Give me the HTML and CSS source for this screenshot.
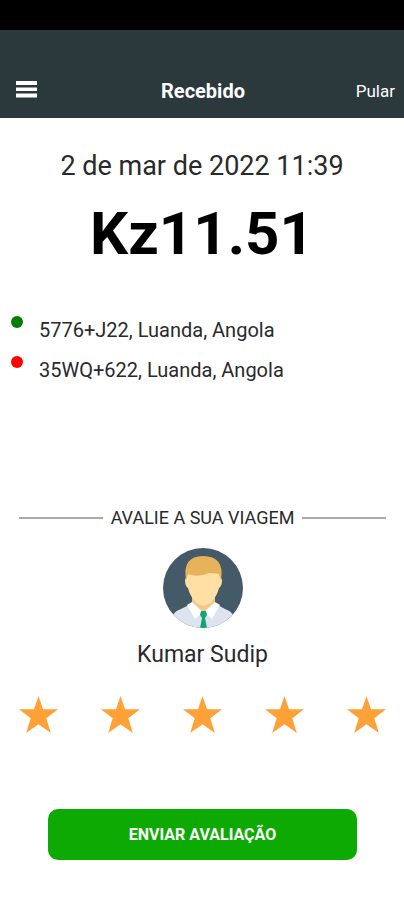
FILE: index.html
```
<!DOCTYPE html>
<html lang="pt">
<head>
  <meta charset="UTF-8" />
  <meta name="viewport" content="width=device-width, initial-scale=1.0" />
  <title>Recebido</title>
  <link rel="stylesheet" href="styles.css">
</head>
<body>
  <div class="status-bar"></div>
  <header class="top-bar">
    <button type="button" class="menu-button" aria-label="Menu">
      <svg width="22" height="18" viewBox="0 0 22 18" fill="#fff">
        <rect x="0" y="0" width="21" height="4" />
        <rect x="0" y="6.5" width="21" height="3.5" />
        <rect x="0" y="12.5" width="21" height="4" />
      </svg>
    </button>
    <h1>Recebido</h1>
    <a class="skip" href="#">Pular</a>
  </header>

  <main>
    <p class="date">2 de mar de 2022 11:39</p>
    <p class="price">Kz11.51</p>

    <ul class="route">
      <li><span class="dot pickup"></span>5776+J22, Luanda, Angola</li>
      <li><span class="dot dropoff"></span>35WQ+622, Luanda, Angola</li>
    </ul>

    <form class="rating-form">
      <h2>AVALIE A SUA VIAGEM</h2>

      <svg class="avatar" viewBox="0 0 80 80">
        <clipPath id="circle"><circle cx="40" cy="40" r="40" /></clipPath>
        <g clip-path="url(#circle)">
          <rect width="80" height="80" fill="#455a68" />
          <path d="M4 80 L10 67 Q12 63 18 61 L30 55 H51 L62 61 Q68 63 70 67 L76 80 Z" fill="#dde4f0" />
          <path d="M29 46 H52 V58 L41 65 L29 58 Z" fill="#f0c98c" />
          <path d="M29 54 L40 64 L32 71 L24 57 Z" fill="#fff" />
          <path d="M52 54 L41 64 L49 71 L57 57 Z" fill="#fff" />
          <path d="M38 63 H43 L44 67 L42 70 L44 80 H37 L39 70 L37 67 Z" fill="#16a277" />
          <path d="M24 27 Q24 9 40 9 Q57 9 57 27 L59 32 Q59 38 56 40 Q54 49 47 55 Q40 60 34 55 Q27 49 25 40 Q22 38 22 32 Z" fill="#ffdfa3" />
          <path d="M23 32 Q19 8 40 8 Q62 8 58 32 L56 26 Q51 25 46 25 Q34 30 25 26 Z" fill="#e8b25a" />
        </g>
      </svg>
      <p class="driver">Kumar Sudip</p>

      <div class="stars" role="radiogroup" aria-label="Avaliação">
        <label><input type="radio" name="stars" value="1" aria-label="1"><svg viewBox="0 0 38 36"><path d="M19 0 L23.4 13 H38 L26.6 21.6 L31 36 L19 27.4 L7 36 L11.4 21.6 L0 13 H14.6 Z" /></svg></label>
        <label><input type="radio" name="stars" value="2" aria-label="2"><svg viewBox="0 0 38 36"><path d="M19 0 L23.4 13 H38 L26.6 21.6 L31 36 L19 27.4 L7 36 L11.4 21.6 L0 13 H14.6 Z" /></svg></label>
        <label><input type="radio" name="stars" value="3" aria-label="3"><svg viewBox="0 0 38 36"><path d="M19 0 L23.4 13 H38 L26.6 21.6 L31 36 L19 27.4 L7 36 L11.4 21.6 L0 13 H14.6 Z" /></svg></label>
        <label><input type="radio" name="stars" value="4" aria-label="4"><svg viewBox="0 0 38 36"><path d="M19 0 L23.4 13 H38 L26.6 21.6 L31 36 L19 27.4 L7 36 L11.4 21.6 L0 13 H14.6 Z" /></svg></label>
        <label><input type="radio" name="stars" value="5" aria-label="5" checked><svg viewBox="0 0 38 36"><path d="M19 0 L23.4 13 H38 L26.6 21.6 L31 36 L19 27.4 L7 36 L11.4 21.6 L0 13 H14.6 Z" /></svg></label>
      </div>

      <button type="submit" class="submit">ENVIAR AVALIAÇÃO</button>
    </form>
  </main>
</body>
</html>
```
FILE: styles.css
```
* {
  box-sizing: border-box;
}
body {
  font-family: Roboto, sans-serif;
  background: #fff;
  color: #2a2a2a;
  margin: 0;
}
h1, h2, p, ul {
  margin: 0;
  padding: 0;
  font-weight: normal;
}
.status-bar {
  height: 30px;
  background: #000;
}
.top-bar {
  display: grid;
  grid-template-columns: 1fr auto 1fr;
  align-items: center;
  padding: 45px 9px 11px 11px;
  background: #2b383c;
  color: #fff;
}
.top-bar h1 {
  font-size: 20px;
  line-height: 32px;
  font-weight: bold;
}
.menu-button {
  justify-self: start;
  display: flex;
  padding: 0 5px 2px;
  border: none;
  background: none;
  cursor: pointer;
}
.skip {
  justify-self: end;
  color: #fff;
  font-size: 17px;
  text-decoration: none;
}
.date {
  margin-top: 28px;
  font-size: 27px;
  line-height: 40px;
  text-align: center;
}
.price {
  margin-top: 12px;
  color: #000;
  font-size: 60px;
  line-height: 72px;
  font-weight: bold;
  text-align: center;
}
.route {
  margin-top: 40px;
  padding: 0 11px;
  list-style: none;
  font-size: 20px;
  line-height: 40px;
}
.route li {
  display: flex;
  align-items: flex-start;
  gap: 16px;
}
.dot {
  width: 12px;
  height: 12px;
  margin-top: 6px;
  border-radius: 50%;
}
.pickup {
  background: #008000;
}
.dropoff {
  background: #f00;
}
.rating-form {
  display: flex;
  flex-direction: column;
  align-items: center;
  margin-top: 112px;
  padding: 0 18px 0 19px;
}
.rating-form h2 {
  display: flex;
  align-items: center;
  align-self: stretch;
  gap: 8px;
  font-size: 18px;
  line-height: 32px;
}
.rating-form h2::before,
.rating-form h2::after {
  content: "";
  flex: 1;
  height: 2px;
  background: #aaa;
}
.avatar {
  width: 80px;
  height: 80px;
  margin-top: 14px;
}
.driver {
  margin-top: 11px;
  font-size: 23px;
  line-height: 32px;
}
.stars {
  display: flex;
  justify-content: space-between;
  align-self: stretch;
  margin-top: 25px;
}
.stars label {
  display: flex;
  cursor: pointer;
}
.stars input {
  appearance: none;
  width: 0;
  height: 0;
  margin: 0;
}
.stars svg {
  width: 39px;
  height: 37px;
  fill: #fea136;
}
.submit {
  align-self: stretch;
  height: 51px;
  margin: 76px 29px 40px;
  border: none;
  border-radius: 10px;
  background: #0caa02;
  color: #fff;
  font-family: inherit;
  font-size: 16px;
  font-weight: bold;
  cursor: pointer;
}
```
